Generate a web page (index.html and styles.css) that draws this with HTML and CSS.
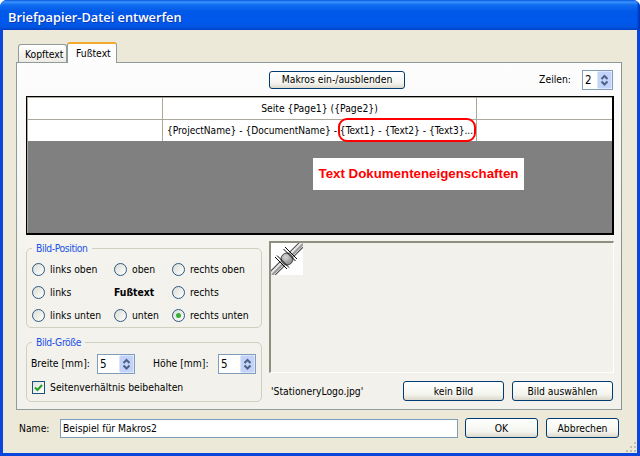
FILE: index.html
```html
<!DOCTYPE html>
<html lang="de">
<head>
<meta charset="utf-8">
<title>Briefpapier-Datei entwerfen</title>
<link rel="stylesheet" href="styles.css">
</head>
<body>
<div class="window">
  <div class="titlebar">Briefpapier-Datei entwerfen</div>
  <div class="client">
    <div class="tabs">
      <div class="tab">Kopftext</div>
      <div class="tab tab-active">Fußtext</div>
    </div>
    <div class="panel">
      <div class="toolbar">
        <button class="btn btn-macros">Makros ein-/ausblenden</button>
        <span class="lbl lines-label">Zeilen:</span>
        <div class="spin spin-lines"><span class="spin-value">2</span><span class="spin-btn"><svg width="13" height="16" viewBox="0 0 13 16"><path class="arrow" d="M3.500 7 6.500 4l3 3"/><path class="arrow" d="M3.500 9.500 6.500 12.500l3-3"/></svg></span></div>
      </div>
      <div class="sheet">
        <div class="cell"></div>
        <div class="cell cell-center">Seite {Page1} ({Page2})</div>
        <div class="cell cell-last"></div>
        <div class="cell cell-low"></div>
        <div class="cell cell-low cell-text">{ProjectName} - {DocumentName} - {Text1} - {Text2} - {Text3}...</div>
        <div class="cell cell-low cell-last"></div>
        <div class="sheet-gray"></div>
        <div class="ring"></div>
        <div class="note">Text Dokumenteneigenschaften</div>
      </div>
      <div class="lower">
        <div class="left">
          <fieldset class="group">
            <legend>Bild-Position</legend>
            <div class="positions">
              <label class="opt"><i class="radio"></i><span class="lbl">links oben</span></label>
              <label class="opt"><i class="radio"></i><span class="lbl">oben</span></label>
              <label class="opt"><i class="radio"></i><span class="lbl">rechts oben</span></label>
              <label class="opt"><i class="radio"></i><span class="lbl">links</span></label>
              <b class="opt"><span class="lbl">Fußtext</span></b>
              <label class="opt"><i class="radio"></i><span class="lbl">rechts</span></label>
              <label class="opt"><i class="radio"></i><span class="lbl">links unten</span></label>
              <label class="opt"><i class="radio"></i><span class="lbl">unten</span></label>
              <label class="opt"><i class="radio radio-on"></i><span class="lbl">rechts unten</span></label>
            </div>
          </fieldset>
          <fieldset class="group group-size">
            <legend>Bild-Größe</legend>
            <div class="size-row">
              <span class="lbl size-w">Breite [mm]:</span>
              <div class="spin"><span class="spin-value">5</span><span class="spin-btn"><svg width="13" height="16" viewBox="0 0 13 16"><path class="arrow" d="M3.500 7 6.500 4l3 3"/><path class="arrow" d="M3.500 9.500 6.500 12.500l3-3"/></svg></span></div>
              <span class="lbl size-h">Höhe [mm]:</span>
              <div class="spin"><span class="spin-value">5</span><span class="spin-btn"><svg width="13" height="16" viewBox="0 0 13 16"><path class="arrow" d="M3.500 7 6.500 4l3 3"/><path class="arrow" d="M3.500 9.500 6.500 12.500l3-3"/></svg></span></div>
            </div>
            <label class="check-row"><i class="check"><svg width="11" height="11" viewBox="0 0 11 11"><path class="tick" d="M2 5.500 4.500 8 9 3"/></svg></i><span class="lbl">Seitenverhältnis beibehalten</span></label>
          </fieldset>
        </div>
        <div class="right">
          <div class="preview">
            <svg class="logo" width="32" height="32" viewBox="0 0 32 32">
              <defs>
                <radialGradient id="ball" cx="0.400" cy="0.350" r="0.700">
                  <stop offset="0" stop-color="#d8d8d8"/>
                  <stop offset="1" stop-color="#808080"/>
                </radialGradient>
              </defs>
              <rect width="32" height="32" fill="#fff"/>
              <path d="M0 32 32 0" stroke="#444" stroke-width="7"/>
              <path d="M0 32 32 0" stroke="#e6e6e6" stroke-width="5"/>
              <path d="M1 32 32 1" stroke="#999" stroke-width="2"/>
              <circle cx="16" cy="16" r="7" fill="#fff"/>
              <circle cx="16" cy="16" r="6" fill="url(#ball)" stroke="#444"/>
              <path d="M4 14 16 26M6 12.500 18 24.500M14 4 26 16M12.500 6 24.500 18" stroke="#000"/>
            </svg>
          </div>
          <div class="file-row">
            <span class="file-name">'StationeryLogo.jpg'</span>
            <button class="btn btn-file">kein Bild</button>
            <button class="btn btn-file">Bild auswählen</button>
          </div>
        </div>
      </div>
    </div>
    <div class="footer">
      <span class="name-label">Name:</span>
      <div class="name-input">Beispiel für Makros2</div>
      <button class="btn btn-dialog">OK</button>
      <button class="btn btn-dialog">Abbrechen</button>
      <svg class="grip" width="12" height="12" viewBox="0 0 12 12"><path d="M9 1h2v2H9zM5 5h2v2H5zM9 5h2v2H9zM1 9h2v2H1zM5 9h2v2H5zM9 9h2v2H9z" fill="#c3bfae"/></svg>
    </div>
  </div>
</div>
</body>
</html>
```

FILE: styles.css
```css
* { box-sizing: border-box; }
html, body { margin: 0; padding: 0; }
body {
  width: 640px;
  height: 456px;
  overflow: hidden;
  font-family: "DejaVu Sans Condensed", "DejaVu Sans", sans-serif;
  font-size: 10.300px;
  color: #000;
}
.window {
  width: 640px;
  height: 456px;
  display: flex;
  flex-direction: column;
  background: #0a46dc;
  border-radius: 7px 7px 0 0;
  overflow: hidden;
}
.titlebar {
  height: 30px;
  flex: none;
  padding-left: 8px;
  line-height: 34px;
  font-family: "Open Sans", sans-serif;
  font-weight: 600;
  font-size: 12.800px;
  color: #fff;
  text-shadow: 1px 1px 0 #0a3bb0;
  background: linear-gradient(#0a5ce0 0, #3a93ff 2px, #0f6cf0 5px, #0058e8 12px, #0058ee 22px, #0255e0 27px, #0040c8 30px);
  box-shadow: inset -3px 0 2px -1px #0034b8;
}
.client {
  flex: 1;
  margin: 0 3px 3px;
  padding: 12px 15px 0 13px;
  background: #ece9d8;
  display: flex;
  flex-direction: column;
  position: relative;
}
.tabs {
  height: 20px;
  padding-left: 2px;
  display: flex;
  align-items: flex-end;
  flex: none;
  position: relative;
  z-index: 1;
}
.tab {
  width: 49px;
  height: 18px;
  padding-left: 6px;
  line-height: 18px;
  background: linear-gradient(#fff, #ecebe3);
  border: 1px solid #919b9c;
  border-bottom: 0;
  border-radius: 3px 3px 0 0;
}
.tab-active {
  width: 50px;
  height: 21px;
  margin-bottom: -1px;
  padding-left: 8px;
  line-height: 18px;
  background: #fdfdfd;
  border-top: 2px solid #f2a92e;
}
.panel {
  height: 348px;
  flex: none;
  border: 1px solid #919b9c;
  border-right-color: #8a9192;
  padding: 7px 7px 0 9px;
  background: linear-gradient(#fdfdfe, #f3f2ec 60%, #f2f1ec);
  display: flex;
  flex-direction: column;
}
.toolbar {
  height: 20px;
  display: flex;
  align-items: center;
  flex: none;
}
.btn {
  font: inherit;
  color: #000;
  padding: 0;
  border: 1px solid #003c74;
  border-radius: 3px;
  background: linear-gradient(#fff, #f4f4ee 70%, #dcd8cb);
  height: 20px;
}
.btn-macros {
  width: 136px;
  height: 18px;
  margin-left: 243px;
  padding-bottom: 2px;
  line-height: 13px;
}
.lbl { line-height: 13px; padding-bottom: 1px; }
.lines-label { margin-left: auto; margin-right: 11px; }
.spin {
  width: 38px;
  height: 20px;
  border: 1px solid #7f9db9;
  background: #fff;
  display: flex;
  align-items: center;
  justify-content: space-between;
}
.spin-lines { width: 31px; margin-right: 1px; }
.spin-value { padding-left: 2px; font-size: 11.500px; }
.spin-btn {
  width: 15px;
  height: 18px;
  display: flex;
  align-items: center;
  justify-content: center;
  background: #c3d2f9;
  border: 1px solid #dbe5fc;
  border-radius: 2px;
}
.arrow { fill: none; stroke: #4d6185; stroke-width: 2; }
.sheet {
  margin-top: 6px;
  height: 139px;
  flex: none;
  position: relative;
  display: grid;
  grid-template-columns: 135px 314px 1fr;
  grid-template-rows: 22px 21px 1fr;
  border: solid #000;
  border-width: 1px 2px 2px 1px;
  padding: 1px 0 0 1px;
  background: #aca899;
}
.cell {
  background: #fff;
  border-right: 1px solid #aca899;
  border-bottom: 1px solid #aca899;
  line-height: 21px;
}
.cell-last { border-right: 0; }
.cell-low { border-bottom: 0; }
.cell-center { text-align: center; }
.cell-text { padding-left: 4px; white-space: nowrap; font-size: 10.100px; }
.sheet-gray { grid-column: 1 / -1; background: #808080; }
.ring {
  position: absolute;
  left: 311px;
  top: 21px;
  width: 138px;
  height: 24px;
  border: 2px solid #f00;
  border-radius: 9px;
}
.note {
  position: absolute;
  left: 286px;
  top: 61px;
  width: 211px;
  height: 32px;
  background: #fff;
  color: #f00;
  font-family: "Liberation Sans", Arial, sans-serif;
  font-weight: 700;
  font-size: 13.300px;
  line-height: 31px;
  text-align: center;
}
.lower {
  display: flex;
  gap: 7px;
  margin-top: 6px;
}
.left { width: 236px; flex: none; }
.right { flex: 1; }
.group {
  margin: 0;
  padding: 3px 4px 0;
  border: 1px solid #d0d0bf;
  border-radius: 5px;
  min-width: 0;
}
.group legend {
  margin-left: 1px;
  padding: 0 4px;
  line-height: 14px;
  letter-spacing: -0.400px;
  color: #2151e8;
}
.group-size {
  margin-top: 7px;
  padding-bottom: 7px;
}
.positions {
  display: grid;
  grid-template-columns: 82px 58px auto;
  grid-auto-rows: 23px;
  padding-left: 1px;
}
.opt {
  display: flex;
  align-items: center;
  gap: 5px;
  white-space: nowrap;
}
.radio {
  width: 13px;
  height: 13px;
  border: 1px solid #2a5a84;
  border-radius: 50%;
  background: linear-gradient(135deg, #dcdcd3, #fff);
  display: flex;
  align-items: center;
  justify-content: center;
  flex: none;
}
.radio-on::after {
  content: "";
  width: 5px;
  height: 5px;
  border-radius: 50%;
  background: #36b034;
}
.size-row { display: flex; align-items: center; height: 20px; margin-top: 2px; }
.size-w { width: 66px; }
.size-h { width: 65px; margin-left: 18px; }
.check-row {
  display: flex;
  align-items: center;
  gap: 5px;
  margin: 7px 0 0 1px;
  height: 13px;
}
.check {
  width: 13px;
  height: 13px;
  border: 1px solid #1c5180;
  background: linear-gradient(135deg, #e2e2da, #fff);
  display: flex;
  flex: none;
}
.tick { fill: none; stroke: #21a121; stroke-width: 2; }
.preview {
  height: 132px;
  border: 2px solid #fff;
  border-top-color: #8f8f80;
  border-left-color: #8f8f80;
  border-right-width: 1px;
  border-bottom-width: 1px;
  background: #f2f1ec;
}
.logo { display: block; }
.file-row {
  display: flex;
  align-items: center;
  margin-top: 8px;
}
.file-name { width: 134px; padding-left: 2px; }
.btn-file { width: 101px; }
.btn-file + .btn-file { margin-left: 8px; }
.footer {
  display: flex;
  align-items: center;
  margin-top: 8px;
  padding-left: 3px;
  height: 20px;
}
.name-label { width: 41px; }
.name-input {
  width: 398px;
  height: 19px;
  border: 1px solid #7f9db9;
  background: #fff;
  padding-left: 2px;
  line-height: 17px;
  margin-top: 1px;
}
.btn-dialog { width: 73px; margin-left: 8px; }
.name-input + .btn-dialog { margin-left: 7px; }
.grip { position: absolute; right: 0; bottom: 0; }
```
